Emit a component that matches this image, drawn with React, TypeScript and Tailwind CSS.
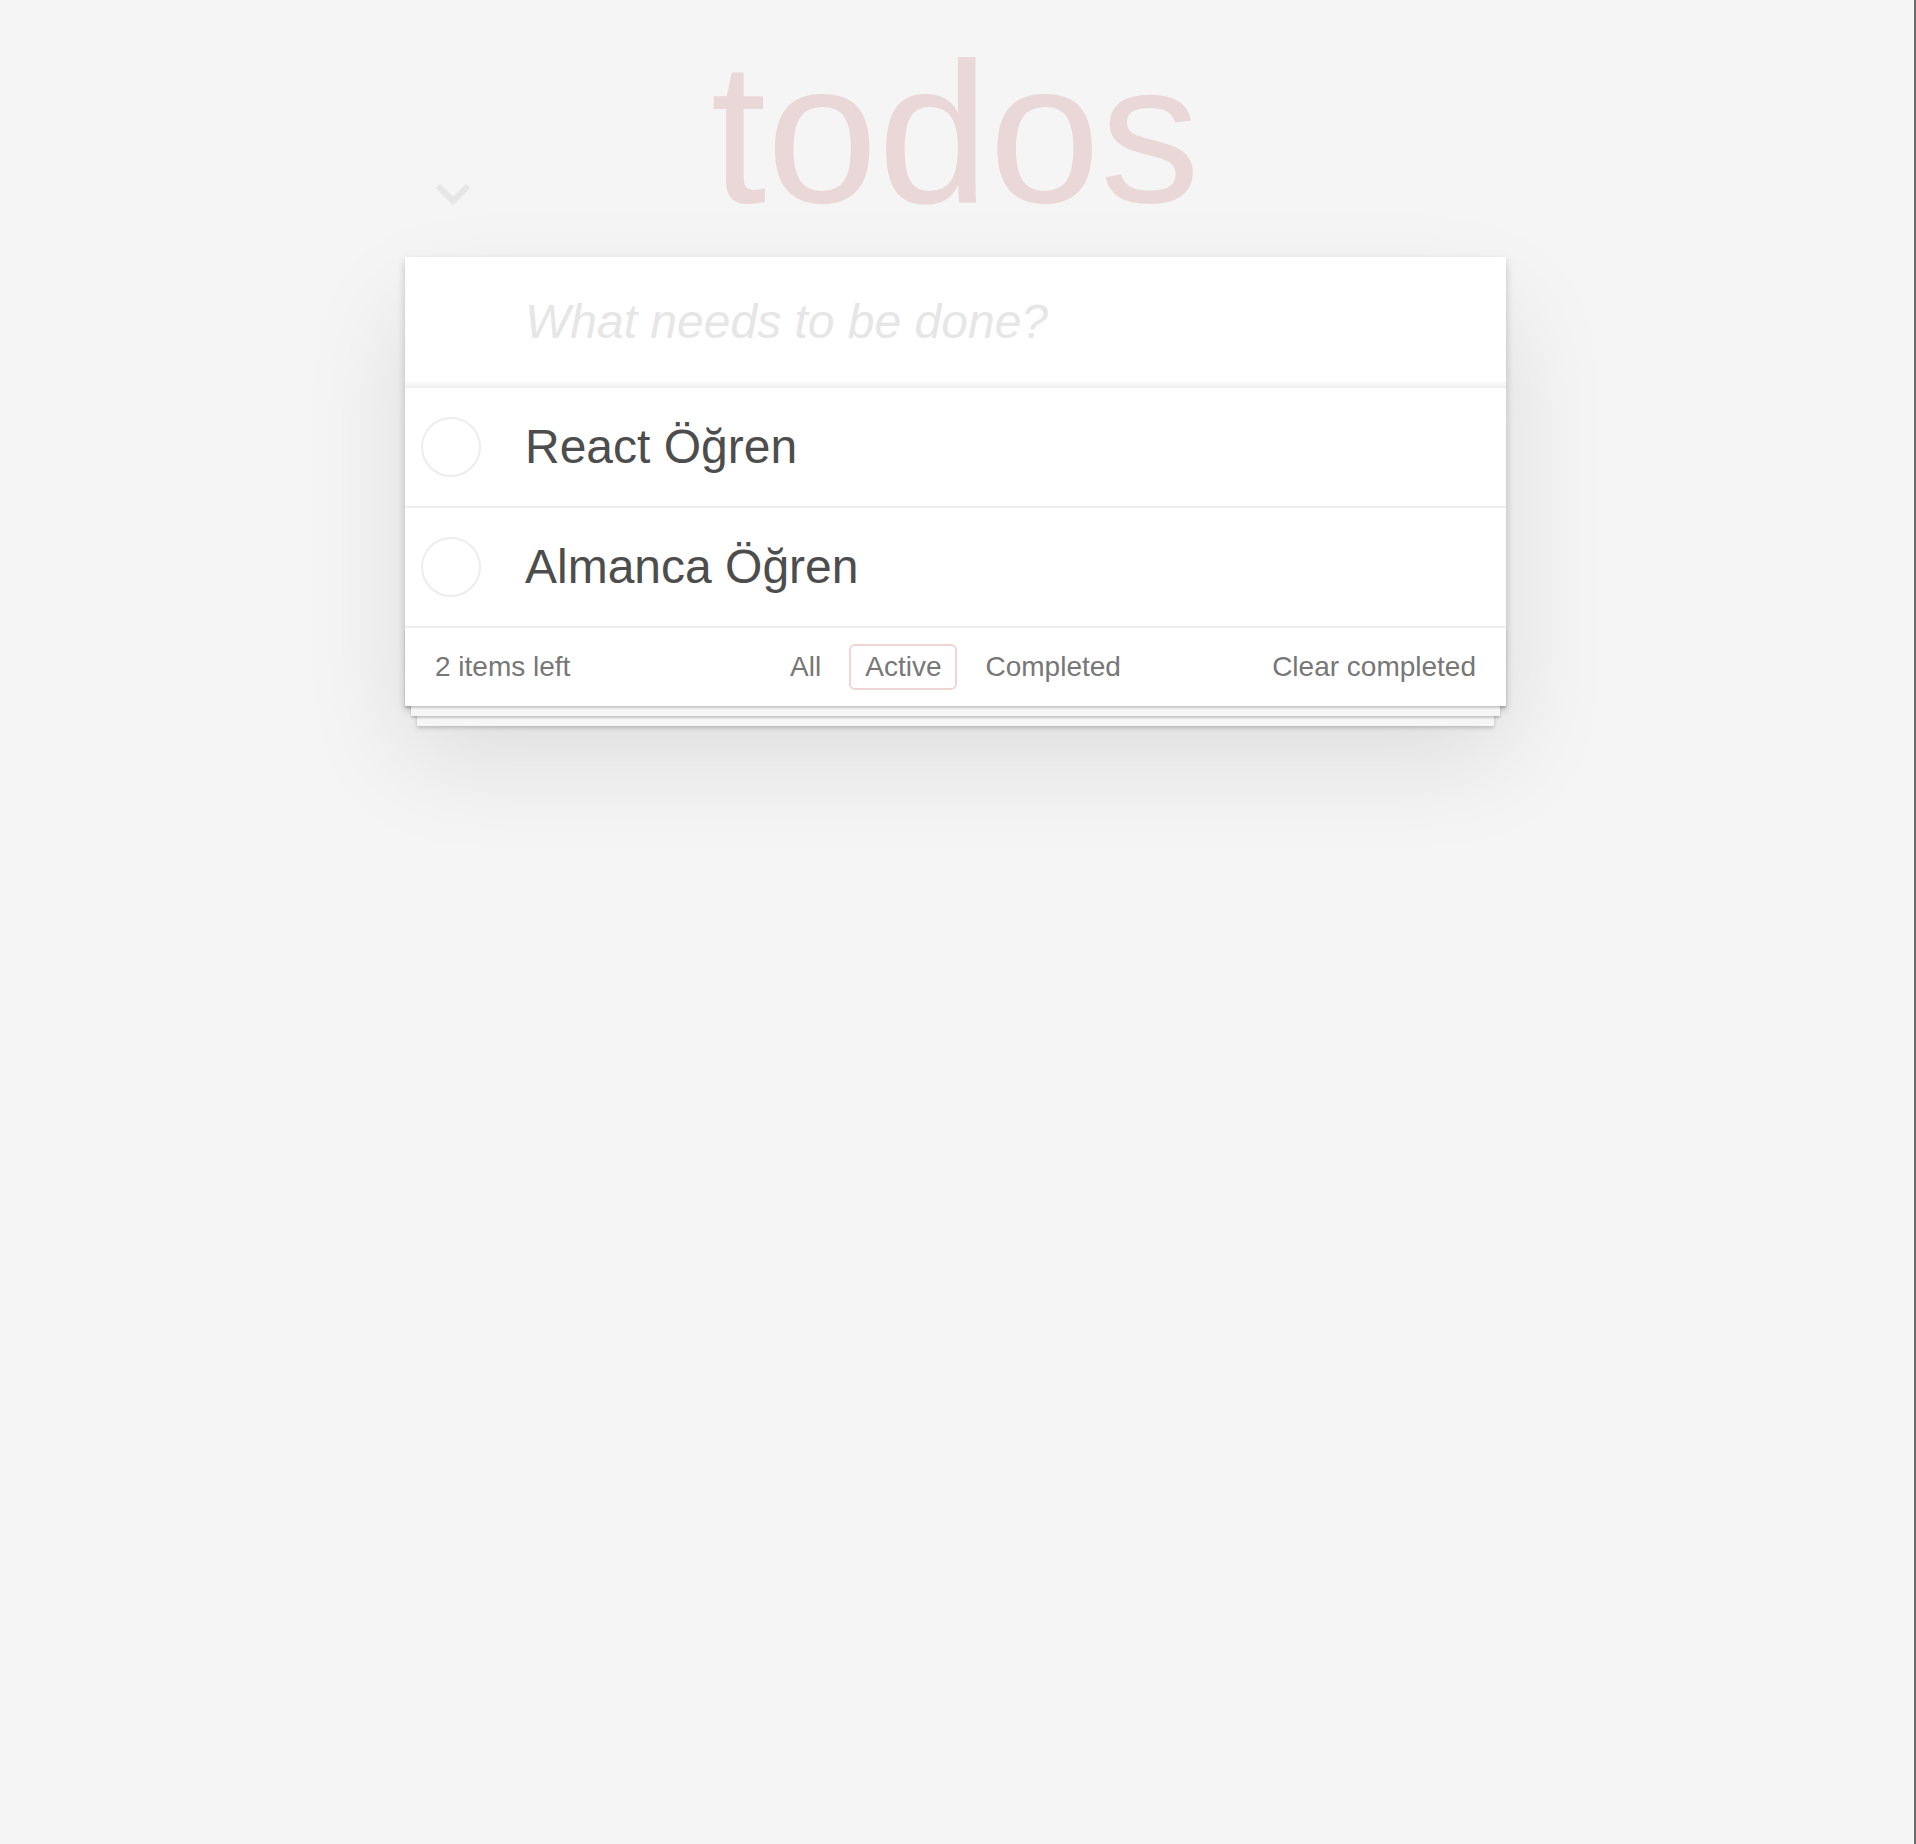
import { useState } from 'react';

type Todo = { id: number; title: string; done: boolean };

const initialTodos: Todo[] = [
  { id: 1, title: 'React Öğren', done: false },
  { id: 2, title: 'Almanca Öğren', done: false },
];

const filters = ['All', 'Active', 'Completed'];

export default function App() {
  const [todos] = useState<Todo[]>(initialTodos);
  const [filter, setFilter] = useState('Active');
  const left = todos.filter((t) => !t.done).length;

  return (
    <div className="min-h-screen bg-[#f5f5f5] border-r-2 border-[#6a6e6a] pr-[3px] font-['Liberation_Sans',Arial,sans-serif] text-[#4d4d4d]">
      <div className="w-[1101px] mx-auto pt-[33px]">
        {/* Title */}
        <h1 className="text-center text-[200px] leading-[200px] font-thin text-[rgba(175,47,47,0.15)]">
          todos
        </h1>

        {/* App card */}
        <section className="relative mt-[24px] bg-white shadow-[0_4px_8px_0_rgba(0,0,0,0.2),0_50px_100px_0_rgba(0,0,0,0.1)]">
          {/* Toggle all */}
          <button className="absolute left-[30px] top-[-74px] w-[36px] h-[22px] flex items-center justify-center">
            <svg width="36" height="22" viewBox="0 0 36 22">
              <polyline
                points="3,3 18,18 33,3"
                fill="none"
                stroke="#e6e6e6"
                strokeWidth="6"
                strokeLinejoin="miter"
              />
            </svg>
          </button>

          {/* New todo */}
          <header className="h-[131px] border-b-2 border-[#f0f0f0] shadow-[inset_0_-4px_2px_rgba(0,0,0,0.03)]">
            <input
              className="w-full h-full pl-[120px] pr-8 text-[48px] bg-transparent outline-none placeholder:italic placeholder:text-[#e6e6e6]"
              placeholder="What needs to be done?"
            />
          </header>

          {/* List */}
          <ul>
            {todos.map((todo) => (
              <li
                key={todo.id}
                className="h-[120px] flex items-center border-b-2 border-[#ededed]"
              >
                <span className="ml-[16px] w-[60px] h-[60px] rounded-full border-2 border-[#ededed]" />
                <label className="ml-[44px] text-[48px] leading-[58px]">{todo.title}</label>
              </li>
            ))}
          </ul>

          {/* Footer */}
          <footer className="relative h-[78px] px-[30px] grid grid-cols-[1fr_auto_1fr] items-center text-[28px] text-[#777] bg-white shadow-[0_2px_2px_rgba(0,0,0,0.2),0_16px_0_-6px_#f6f6f6,0_18px_2px_-6px_rgba(0,0,0,0.2),0_32px_0_-12px_#f6f6f6,0_34px_4px_-12px_rgba(0,0,0,0.2)]">
            <span>{left} items left</span>
            <div className="flex items-center gap-[12px]">
              {filters.map((f) => (
                <a
                  key={f}
                  onClick={() => setFilter(f)}
                  className={`px-[14px] py-[6px] leading-[30px] rounded-[6px] border-2 cursor-pointer ${
                    filter === f ? 'border-[rgba(175,47,47,0.2)]' : 'border-transparent'
                  }`}
                >
                  {f}
                </a>
              ))}
            </div>
            <button className="justify-self-end">Clear completed</button>
          </footer>
        </section>
      </div>
    </div>
  );
}
